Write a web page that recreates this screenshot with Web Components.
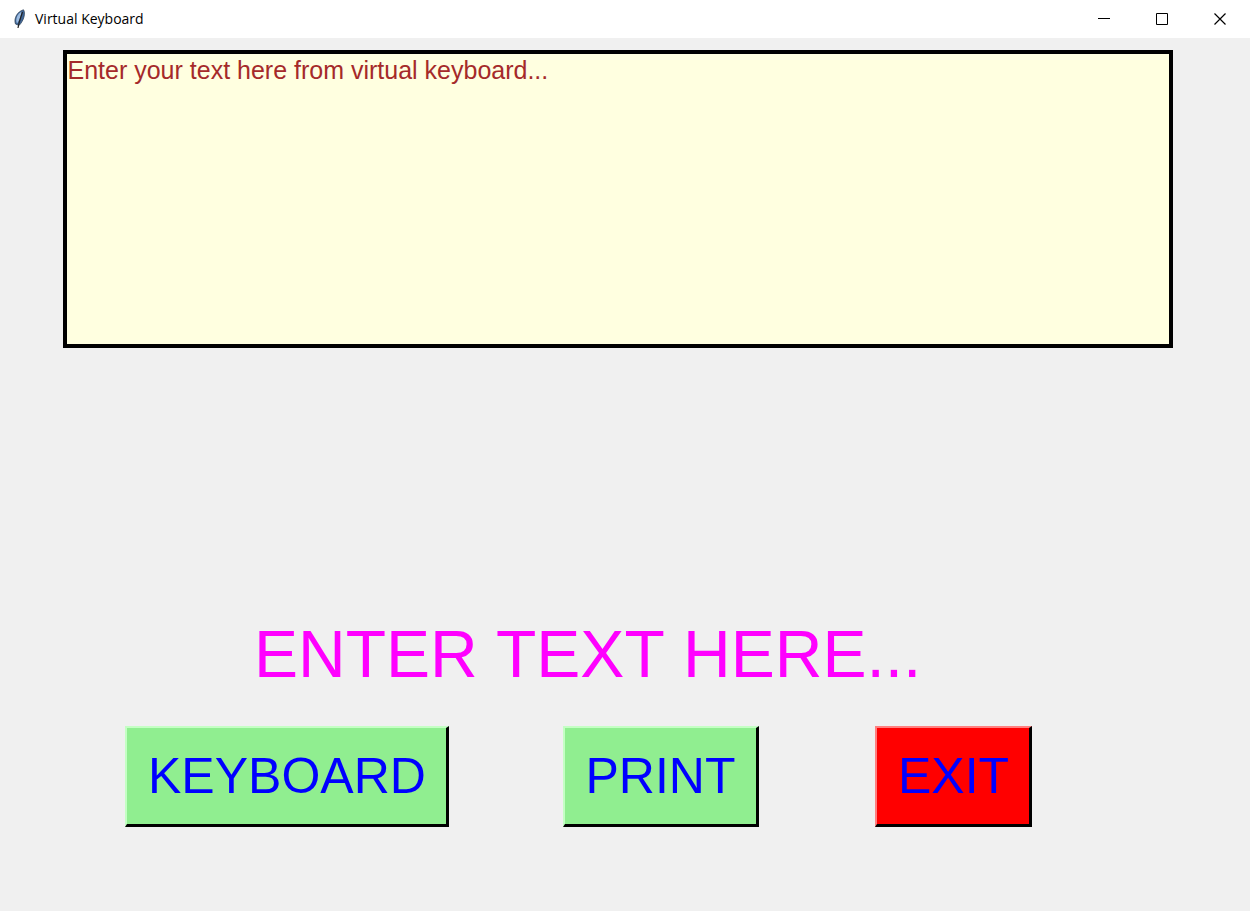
<!DOCTYPE html>
<html lang="en">
<head>
<meta charset="utf-8">
<title>Virtual Keyboard</title>
<style>
html, body { margin: 0; background: #f0f0f0; }
</style>
</head>
<body>
<app-window></app-window>
<script>
const define = (name, html) => customElements.define(name, class extends HTMLElement {
  constructor() {
    super();
    this.attachShadow({ mode: "open" }).innerHTML = html;
  }
});

define("window-bar", `
<style>
:host { display: flex; align-items: center; height: 38px; background: #fff; color: #000; font: 14px/20px "Open Sans", sans-serif; }
.feather { width: 16px; height: 20px; margin-left: 12px; margin-right: 7px; }
.title { flex: 1; }
button { width: 58px; height: 38px; padding: 0; border: 0; background: none; display: grid; place-items: center; }
button svg { width: 12px; height: 12px; fill: none; stroke: #000; overflow: visible; }
.controls { display: flex; padding-right: 1px; }
</style>
<svg class="feather" viewBox="0 0 16 20" aria-hidden="true">
  <path d="M3.500 15C1.500 10 5 2.500 11.500 .8C13.700 4 12 11.500 7 16.500Z" fill="#3f6698" stroke="#34465c" stroke-width=".8"/>
  <path d="M4.500 13.500C3.500 9 6 4.500 9.500 2.800C9 7 7.500 11 5.500 14Z" fill="#9cbce2"/>
  <path d="M10.500 3C9 8 7 12 6 19" fill="none" stroke="#222" stroke-width="1.200"/>
</svg>
<span class="title"><slot></slot></span>
<div class="controls">
  <button aria-label="Minimize"><svg viewBox="0 0 12 12"><path d="M0 5.5H12"/></svg></button>
  <button aria-label="Maximize"><svg viewBox="0 0 12 12"><path d="M.5 .5H11.5V11.5H.5Z"/></svg></button>
  <button aria-label="Close"><svg viewBox="0 0 12 12"><path d="M.5 .5L11.5 11.5M11.5 .5L.5 11.5" stroke-width="1.2"/></svg></button>
</div>`);

define("text-entry", `
<style>
:host { display: block; }
textarea { display: block; box-sizing: border-box; width: 100%; height: 298px; margin: 0; padding: 2px 1px; border: 4px solid #000; border-radius: 0; outline: 0; resize: none; background: #ffffe0; color: #a52a2a; font: 25px/29px "Liberation Sans", Arial, sans-serif; }
</style>
<textarea aria-label="Text">Enter your text here from virtual keyboard...</textarea>`);

define("raised-button", `
<style>
:host { display: block; }
button { display: block; padding: 21px 20px 20px 21px; border: solid; border-width: 2px 3px 3px 2px; border-color: var(--light) #000 #000 var(--light); border-radius: 0; background: var(--face); color: #00f; font: 50px/55px "Liberation Sans", Arial, sans-serif; white-space: nowrap; }
</style>
<button type="button"><slot></slot></button>`);

define("app-window", `
<style>
:host { display: flex; flex-direction: column; min-height: 100vh; }
main { flex: 1; display: flex; flex-direction: column; padding-top: 12px; padding-bottom: 84px; }
text-entry { margin: 0 6.2% 0 5%; }
h1 { margin: auto 0 32px 20%; padding-left: 4px; color: #f0f; font: 400 66px/80px "Liberation Sans", Arial, sans-serif; font-kerning: none; }
.actions { display: grid; grid-template-columns: 35fr 25fr 30fr; margin-left: 10%; justify-items: start; }
raised-button { --face: #90ee90; --light: #c4ffc4; }
.exit { --face: #f00; --light: #ff7f7f; }
</style>
<window-bar>Virtual Keyboard</window-bar>
<main>
  <text-entry></text-entry>
  <h1>ENTER TEXT HERE...</h1>
  <div class="actions">
    <raised-button>KEYBOARD</raised-button>
    <raised-button>PRINT</raised-button>
    <raised-button class="exit">EXIT</raised-button>
  </div>
</main>`);
</script>
</body>
</html>
